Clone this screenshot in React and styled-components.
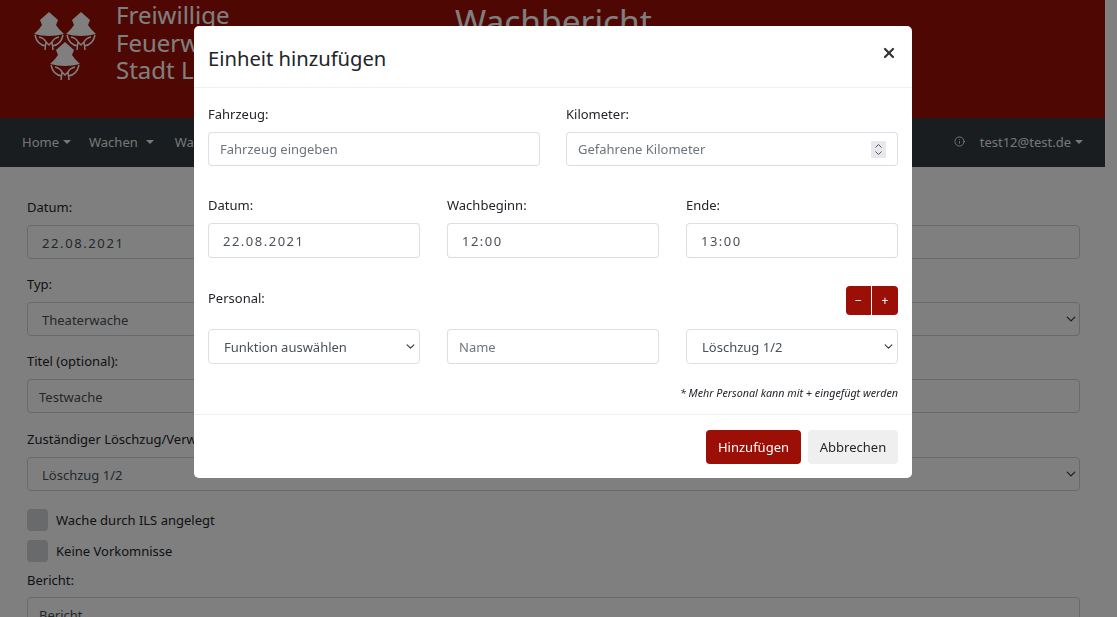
import React from "react";
import styled, { createGlobalStyle } from "styled-components";
import { Info, X } from "lucide-react";

const FONT = `"Noto Sans", "Open Sans", sans-serif`;
const CHEVRON = `url("data:image/svg+xml,%3Csvg xmlns='http://www.w3.org/2000/svg' viewBox='0 0 16 16'%3E%3Cpath fill='none' stroke='%23343a40' stroke-linecap='round' stroke-linejoin='round' stroke-width='2' d='M2 5l6 6 6-6'/%3E%3C/svg%3E")`;

const GlobalStyle = createGlobalStyle`
  html, body {
    margin: 0;
    height: 100%;
    overflow: hidden;
    background: #fff;
    font-family: ${FONT};
  }
  * {
    box-sizing: border-box;
  }
`;

const Page = styled.div`
  width: 1105px;
  height: 617px;
  overflow: hidden;
`;

const Banner = styled.header`
  height: 118px;
  background: #9c0f06;
  display: flex;
  overflow: hidden;
`;

const Logo = styled.svg`
  width: 64px;
  height: 72px;
  margin: 11px 0 0 33px;
  flex: none;
`;

const LogoText = styled.div`
  margin: 1px 0 0 19px;
  color: #fff;
  font-size: 24px;
  line-height: 27.5px;
  width: 339px;
  flex: none;
`;

const PageTitle = styled.h1`
  margin: -3px 0 0 0;
  color: #fff;
  font-size: 33.5px;
  font-weight: 400;
  line-height: 48px;
`;

const Nav = styled.nav`
  height: 49px;
  background: #343a40;
  display: flex;
  align-items: center;
  padding: 0 21px 2px 22px;
  font-size: 13px;
  color: rgba(255, 255, 255, 0.92);
`;

const NavItem = styled.span`
  display: inline-flex;
  align-items: center;
  gap: ${(p) => p.$gap || 4}px;
  margin-right: ${(p) => p.$mr || 18}px;
  white-space: nowrap;
`;

const Caret = styled.i`
  display: inline-block;
  width: 0;
  height: 0;
  border-top: 4px solid currentColor;
  border-left: 4px solid transparent;
  border-right: 4px solid transparent;
`;

const NavRight = styled.div`
  margin-left: auto;
  display: flex;
  align-items: center;
  gap: 15px;
`;

const PageForm = styled.main`
  padding: 31px 25px 0 27px;
`;

const PageField = styled.div`
  margin-bottom: ${(p) => p.$mb || 16}px;
`;

const PageLabel = styled.label`
  display: block;
  font-size: 13px;
  line-height: 18px;
  color: #212529;
  margin-bottom: ${(p) => p.$mb || 9}px;
`;

const PageControl = styled.div`
  height: 34px;
  border: 1px solid #ced4da;
  border-radius: 4px;
  background: #fff;
  display: flex;
  align-items: center;
  padding: 2px 0 0 ${(p) => p.$pad || 11}px;
  font-size: 13px;
  color: #495057;
  letter-spacing: ${(p) => (p.$spaced ? "1.6px" : "0")};
`;

const PageSelect = styled(PageControl)`
  padding-left: 14px;
  background: #fff ${CHEVRON} no-repeat right 3px center / 10px 10px;
`;

const CheckRow = styled.div`
  display: flex;
  align-items: center;
  gap: 8px;
  height: 22px;
  margin-bottom: 9px;
  font-size: 13px;
  color: #212529;
`;

const CheckBox = styled.span`
  width: 21px;
  height: 22px;
  border-radius: 4px;
  background: #d3d5d8;
`;

const Backdrop = styled.div`
  position: fixed;
  inset: 0;
  background: rgba(0, 0, 0, 0.5);
`;

const Modal = styled.section`
  position: fixed;
  left: 194px;
  top: 26px;
  width: 718px;
  height: 452px;
  background: #fff;
  border-radius: 5px;
  display: flex;
  flex-direction: column;
  color: #212529;
`;

const ModalHeader = styled.div`
  height: 62px;
  flex: none;
  padding: 0 15px 0 14px;
  display: flex;
  align-items: center;
  justify-content: space-between;
  border-bottom: 1px solid #eeeff1;
`;

const ModalTitle = styled.h2`
  margin: 3px 0 0;
  font-size: 20.2px;
  font-weight: 400;
  line-height: 30px;
`;

const CloseButton = styled.button`
  border: 0;
  background: none;
  padding: 0;
  margin-bottom: 8px;
  display: flex;
  color: #333;
`;

const ModalBody = styled.div`
  flex: 1;
  padding: 17px 14px 0;
`;

const Row = styled.div`
  display: grid;
  grid-template-columns: repeat(${(p) => p.$cols}, 1fr);
  column-gap: ${(p) => p.$gap}px;
  margin-bottom: ${(p) => p.$mb || 0}px;
`;

const Label = styled.label`
  display: block;
  font-size: 13px;
  line-height: 18px;
  margin-bottom: 9px;
`;

const Control = styled.div`
  position: relative;
`;

const Input = styled.input`
  width: 100%;
  height: ${(p) => p.$h || 34}px;
  border: 1px solid #dcdfe6;
  border-bottom-color: #d9dce3;
  border-radius: 4px;
  background: #fff;
  padding: 0 ${(p) => p.$pad || 11}px;
  font-family: ${FONT};
  font-size: 13px;
  color: #495057;
  letter-spacing: ${(p) => (p.$spaced ? "1.5px" : "0")};
  outline: 0;
  &::placeholder {
    color: #6c757d;
    opacity: 1;
  }
`;

const Select = styled.select`
  width: 100%;
  height: 35px;
  appearance: none;
  border: 1px solid #dcdfe6;
  border-radius: 4px;
  padding: 0 20px 0 15px;
  font-family: ${FONT};
  font-size: 13px;
  color: #495057;
  background: #fff ${CHEVRON} no-repeat right 4px center / 9px 9px;
  outline: 0;
`;

const Spinner = styled.svg`
  position: absolute;
  right: 12px;
  top: 9px;
  width: 15px;
  height: 17px;
  background: #e8e8ef;
`;

const PersonalHead = styled.div`
  display: flex;
  align-items: center;
  justify-content: space-between;
  height: 29px;
  margin-bottom: 14px;
`;

const PersonalLabel = styled(Label)`
  margin: 0 0 6px;
`;

const ButtonGroup = styled.div`
  display: flex;
  gap: 1px;
`;

const StepButton = styled.button`
  width: ${(p) => (p.$left ? 25 : 26)}px;
  height: 29px;
  border: 0;
  padding: 0;
  background: #9c0f06;
  color: #fff;
  font-family: ${FONT};
  font-size: 12px;
  border-radius: ${(p) => (p.$left ? "4px 0 0 4px" : "0 4px 4px 0")};
`;

const Note = styled.p`
  margin: 21px 0 0;
  text-align: right;
  font-size: 10.75px;
  line-height: 16px;
  font-style: italic;
`;

const ModalFooter = styled.div`
  height: 64px;
  flex: none;
  border-top: 1px solid #eeeff1;
  display: flex;
  justify-content: flex-end;
  align-items: center;
  gap: 7px;
  padding: 1px 14px 0;
`;

const Button = styled.button`
  height: 34px;
  width: ${(p) => p.$w}px;
  border: 0;
  border-radius: 4px;
  padding: 0;
  font-family: ${FONT};
  font-size: 13px;
  background: ${(p) => (p.$primary ? "#9c0f06" : "#efefef")};
  color: ${(p) => (p.$primary ? "#fff" : "#212529")};
`;

function Helmet({ x, y }) {
  return (
    <g transform={`translate(${x} ${y})`} fill="#fff">
      <path d="M15 0 L24 8 L22 13 L25 17 L30 22 Q15 26 0 22 L5 17 L8 13 L6 8 Z" />
      <path
        d="M1 23 Q3 33 12 34 M29 23 Q27 33 18 34 M5 25 Q10 26 12 30 L11 38 M25 25 Q20 26 18 30 L19 38 M12 30 L15 33 L18 30"
        fill="none"
        stroke="#fff"
        strokeWidth="1.5"
      />
    </g>
  );
}

export default function App() {
  return (
    <>
      <GlobalStyle />
      <Page>
        <Banner>
          <Logo viewBox="0 0 64 72">
            <Helmet x={1} y={1} />
            <Helmet x={33} y={1} />
            <Helmet x={17} y={31} />
          </Logo>
          <LogoText>
            Freiwillige
            <br />
            Feuerwehr
            <br />
            Stadt L
          </LogoText>
          <PageTitle>Wachbericht</PageTitle>
        </Banner>
        <Nav>
          <NavItem>
            Home <Caret />
          </NavItem>
          <NavItem $gap={8} $mr={21}>
            Wachen <Caret />
          </NavItem>
          <NavItem>Wachen</NavItem>
          <NavRight>
            <Info size={11} />
            <NavItem $mr={1}>
              test12@test.de <Caret />
            </NavItem>
          </NavRight>
        </Nav>
        <PageForm>
          <PageField>
            <PageLabel>Datum:</PageLabel>
            <PageControl $pad={14} $spaced>
              22.08.2021
            </PageControl>
          </PageField>
          <PageField>
            <PageLabel>Typ:</PageLabel>
            <PageSelect>Theaterwache</PageSelect>
          </PageField>
          <PageField $mb={17}>
            <PageLabel>Titel (optional):</PageLabel>
            <PageControl>Testwache</PageControl>
          </PageField>
          <PageField $mb={18}>
            <PageLabel>Zuständiger Löschzug/Verwaltung:</PageLabel>
            <PageSelect>Löschzug 1/2</PageSelect>
          </PageField>
          <CheckRow>
            <CheckBox />
            Wache durch ILS angelegt
          </CheckRow>
          <CheckRow>
            <CheckBox />
            Keine Vorkomnisse
          </CheckRow>
          <PageLabel $mb={8}>Bericht:</PageLabel>
          <PageControl>Bericht</PageControl>
        </PageForm>
      </Page>
      <Backdrop />
      <Modal>
        <ModalHeader>
          <ModalTitle>Einheit hinzufügen</ModalTitle>
          <CloseButton aria-label="Schließen">
            <X size={16} strokeWidth={3.2} />
          </CloseButton>
        </ModalHeader>
        <ModalBody>
          <Row $cols={2} $gap={26} $mb={30}>
            <div>
              <Label>Fahrzeug:</Label>
              <Input placeholder="Fahrzeug eingeben" />
            </div>
            <div>
              <Label>Kilometer:</Label>
              <Control>
                <Input placeholder="Gefahrene Kilometer" />
                <Spinner viewBox="0 0 15 17">
                  <path
                    d="M4.5 6.5 L7.5 3.5 L10.5 6.5 M4.5 10.5 L7.5 13.5 L10.5 10.5"
                    fill="none"
                    stroke="#555"
                    strokeWidth="1"
                  />
                </Spinner>
              </Control>
            </div>
          </Row>
          <Row $cols={3} $gap={27} $mb={28}>
            <div>
              <Label>Datum:</Label>
              <Input defaultValue="22.08.2021" $h={35} $pad={14} $spaced />
            </div>
            <div>
              <Label>Wachbeginn:</Label>
              <Input defaultValue="12:00" $h={35} $pad={14} $spaced />
            </div>
            <div>
              <Label>Ende:</Label>
              <Input defaultValue="13:00" $h={35} $pad={14} $spaced />
            </div>
          </Row>
          <PersonalHead>
            <PersonalLabel>Personal:</PersonalLabel>
            <ButtonGroup>
              <StepButton $left>−</StepButton>
              <StepButton>+</StepButton>
            </ButtonGroup>
          </PersonalHead>
          <Row $cols={3} $gap={27}>
            <Select defaultValue="f">
              <option value="f">Funktion auswählen</option>
            </Select>
            <Input placeholder="Name" $h={35} />
            <Select defaultValue="l">
              <option value="l">Löschzug 1/2</option>
            </Select>
          </Row>
          <Note>* Mehr Personal kann mit + eingefügt werden</Note>
        </ModalBody>
        <ModalFooter>
          <Button $primary $w={95}>
            Hinzufügen
          </Button>
          <Button $w={90}>Abbrechen</Button>
        </ModalFooter>
      </Modal>
    </>
  );
}
